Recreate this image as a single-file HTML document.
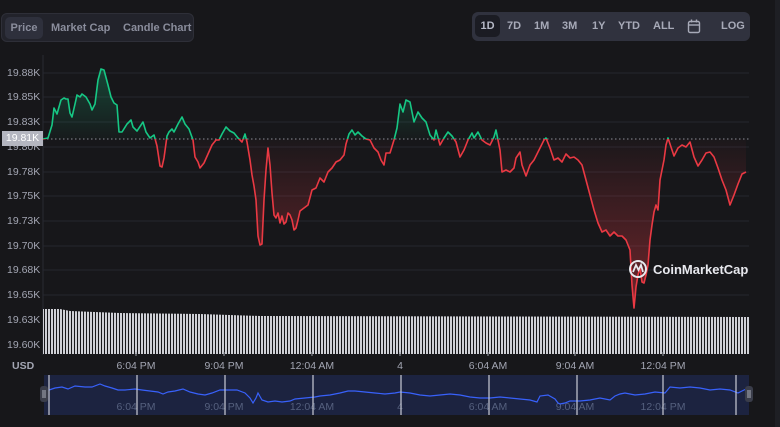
<!DOCTYPE html>
<html><head><meta charset="utf-8"><style>
body{margin:0;width:780px;height:427px;background:#17171a;overflow:hidden;font-family:"Liberation Sans",sans-serif;position:relative}
.tabs{position:absolute;left:1px;top:13px;width:193px;height:29px;background:#22232b;border:1px solid #2e2f38;border-radius:6px;box-sizing:border-box}
.tabs span{position:absolute;top:8px;font-size:11px;color:#8a8d9c;font-weight:bold}
.tabs .on{position:absolute;left:3px;top:3px;width:38px;height:22px;background:#2e303c;border-radius:5px;color:#8a8d9c;line-height:22px;text-align:center;font-weight:bold;font-size:11px}
.rng{position:absolute;left:472px;top:12px;width:278px;height:29px;background:#30323e;border-radius:6px}
.rng span{position:absolute;top:8px;font-size:11px;color:#a7aab8;font-weight:bold}
.rng .on{position:absolute;left:3px;top:3px;width:25px;height:22px;background:#1b1c23;border-radius:5px;line-height:22px;text-align:center;color:#b6b9c6;font-size:11px;font-weight:bold}
.yl{position:absolute;left:7px;font-size:10.5px;color:#a3a6b3;transform:translateY(-6px)}
.xl{position:absolute;top:360px;font-size:10.5px;color:#a3a6b3;transform:translateX(-50%)}
</style></head><body>
<div class="tabs"><div class="on">Price</div><span style="left:49px">Market Cap</span><span style="left:121px">Candle Chart</span></div>
<div class="rng"><div class="on">1D</div><span style="left:35px">7D</span><span style="left:62px">1M</span><span style="left:90px">3M</span><span style="left:120px">1Y</span><span style="left:146px">YTD</span><span style="left:181px">ALL</span>
<svg style="position:absolute;left:215px;top:7px" width="14" height="15" viewBox="0 0 14 15"><rect x="1.5" y="2.5" width="11" height="11" rx="1.5" fill="none" stroke="#a7aab8" stroke-width="1.4"/><line x1="1.5" y1="6" x2="12.5" y2="6" stroke="#a7aab8" stroke-width="1.4"/><line x1="4.5" y1="0.5" x2="4.5" y2="3.5" stroke="#a7aab8" stroke-width="1.4"/><line x1="9.5" y1="0.5" x2="9.5" y2="3.5" stroke="#a7aab8" stroke-width="1.4"/></svg>
<span style="left:249px">LOG</span></div>
<div style="position:absolute;left:775px;top:0;width:5px;height:427px;background:#1e1f24"></div>
<svg id="s" style="position:absolute;left:0;top:0" width="780" height="427">
<defs>
<clipPath id="up"><rect x="0" y="0" width="780" height="139"/></clipPath>
<clipPath id="dn"><rect x="0" y="139" width="780" height="300"/></clipPath>
<linearGradient id="gg" gradientUnits="userSpaceOnUse" x1="0" y1="65" x2="0" y2="139"><stop offset="0" stop-color="#16c784" stop-opacity="0.28"/><stop offset="1" stop-color="#16c784" stop-opacity="0.02"/></linearGradient>
<linearGradient id="rg" gradientUnits="userSpaceOnUse" x1="0" y1="139" x2="0" y2="300"><stop offset="0" stop-color="#ea3943" stop-opacity="0.02"/><stop offset="1" stop-color="#ea3943" stop-opacity="0.4"/></linearGradient>
<pattern id="vb" width="3" height="10" patternUnits="userSpaceOnUse"><rect width="2" height="10" fill="#cfd0d6"/></pattern>
</defs>
<line x1="43" y1="55" x2="43" y2="355" stroke="#2a2b33"/>
<g stroke="#26272f" stroke-width="1">
<line x1="43" y1="73" x2="749" y2="73"/><line x1="43" y1="97" x2="749" y2="97"/><line x1="43" y1="122" x2="749" y2="122"/><line x1="43" y1="147" x2="749" y2="147"/><line x1="43" y1="172" x2="749" y2="172"/><line x1="43" y1="196" x2="749" y2="196"/><line x1="43" y1="221" x2="749" y2="221"/><line x1="43" y1="246" x2="749" y2="246"/><line x1="43" y1="270" x2="749" y2="270"/><line x1="43" y1="295" x2="749" y2="295"/></g>
<polygon points="43,309 60,309 70,311 120,313 200,314 260,316 749,317 749,354 43,354" fill="url(#vb)"/>
<polygon id="fu" clip-path="url(#up)" fill="url(#gg)"/>
<polygon id="fd" clip-path="url(#dn)" fill="url(#rg)"/>
<line x1="43" y1="139" x2="749" y2="139" stroke="#8a8c96" stroke-dasharray="1.5 2.5"/>
<polyline id="lr" fill="none" stroke-width="1.6" stroke-linejoin="round" stroke="#ea3943" clip-path="url(#dn)"/>
<polyline id="lg" fill="none" stroke-width="1.6" stroke-linejoin="round" stroke="#16c784" clip-path="url(#up)"/>
<g stroke="#9a9ca6"><line x1="136" y1="352" x2="136" y2="356"/><line x1="224" y1="352" x2="224" y2="356"/><line x1="312" y1="352" x2="312" y2="356"/><line x1="400" y1="352" x2="400" y2="356"/><line x1="488" y1="352" x2="488" y2="356"/><line x1="575" y1="352" x2="575" y2="356"/><line x1="663" y1="352" x2="663" y2="356"/></g>
<rect x="44" y="375" width="705" height="40" fill="#1c2340"/>
<g fill="#55607e" font-size="10.5" font-family="Liberation Sans" text-anchor="middle"><text x="136" y="410">6:04 PM</text><text x="224" y="410">9:04 PM</text><text x="312" y="410">12:04 AM</text><text x="400" y="410">4</text><text x="488" y="410">6:04 AM</text><text x="575" y="410">9:04 AM</text><text x="663" y="410">12:04 PM</text></g>
<polyline fill="none" stroke="#3861fb" stroke-width="1.2" points="49,390 55,388 62,387 68,389 75,386 85,387 92,387 100,384 105,386 112,388 118,390 125,390 135,389 142,390 150,391 158,392 163,394 168,392 175,391 183,389 190,392 198,394 205,395 212,393 220,390 228,390 237,390 245,393 250,398 253,403 256,398 258,393 262,400 268,402 275,401 282,402 290,401 295,399 305,398 315,397 320,396 330,395 340,393 348,391 355,391 365,392 375,393 385,394 395,393 400,392 410,393 420,395 430,396 440,395 450,394 460,395 470,397 480,398 490,398 500,397 510,398 520,399 530,400 537,402 540,396 548,395 555,399 558,403 560,404 565,403 570,401 580,401 590,400 600,398 610,400 615,396 620,394 625,393 635,395 645,394 655,392 665,393 670,387 680,388 690,387 700,388 710,390 720,389 730,390 738,393 744,390 749,388"/>
<g stroke="#c9ccd6" stroke-width="1.2"><line x1="49" y1="375" x2="49" y2="415"/><line x1="137" y1="375" x2="137" y2="415"/><line x1="225" y1="375" x2="225" y2="415"/><line x1="313" y1="375" x2="313" y2="415"/><line x1="401" y1="375" x2="401" y2="415"/><line x1="489" y1="375" x2="489" y2="415"/><line x1="577" y1="375" x2="577" y2="415"/><line x1="663" y1="375" x2="663" y2="415"/><line x1="736" y1="375" x2="736" y2="415"/></g>
<rect x="40" y="386" width="8" height="16" rx="3" fill="#3a3d4a"/><rect x="745" y="386" width="8" height="16" rx="3" fill="#3a3d4a"/>
<g stroke="#c9ccd6" stroke-width="0.8"><line x1="43" y1="390" x2="43" y2="398"/><line x1="45" y1="390" x2="45" y2="398"/><line x1="748" y1="390" x2="748" y2="398"/><line x1="750" y1="390" x2="750" y2="398"/></g>
<circle cx="638" cy="269" r="8" fill="none" stroke="#e8e9ee" stroke-width="2"/>
<path d="M633,272 L636,265 L638.5,270 L641,265 L643,272" fill="none" stroke="#e8e9ee" stroke-width="1.8"/>
<text x="653" y="274" fill="#e8e9ee" font-size="13" font-weight="bold" font-family="Liberation Sans">CoinMarketCap</text>
</svg>
<script>
var p="43,139 48,138 52,125 54,108 57,114 61,100 64,98 66,99 68,99 70,113 72,117 75,104 77,95 80,97 82,94 86,97 90,104 92,110 95,104 98,80 101,69 104,70 108,85 111,97 114,103 117,105 119,132 122,132 127,124 131,120 133,127 137,131 143,122 146,132 150,138 154,135 157,146 160,166 162,167 164,158 167,136 169,132 172,129 174,132 178,124 182,117 185,124 189,129 193,140 195,157 198,162 200,168 204,163 208,154 212,145 216,140 219,140 222,134 226,127 230,131 234,133 238,138 242,142 245,134 247,142 250,160 252,175 254,186 256,200 258,236 260,245 262,244 264,200 266,170 268,148 270,165 272,193 274,215 276,218 278,213 280,223 282,216 284,224 286,222 288,213 290,215 292,220 294,230 296,228 298,220 300,211 304,208 308,205 312,190 316,188 320,178 324,182 328,172 332,168 336,162 340,160 344,155 346,144 349,134 352,130 355,135 358,132 362,136 366,139 370,140 374,148 378,152 381,160 384,165 386,153 390,153 394,140 397,128 400,104 403,112 406,100 410,102 414,122 418,112 422,118 426,122 430,135 434,140 436,130 440,145 444,138 448,132 452,136 456,142 460,157 464,150 468,140 472,133 474,138 478,132 482,140 486,143 490,145 494,137 496,130 500,150 502,172 506,170 510,172 514,168 516,158 520,152 522,165 526,176 530,165 534,160 538,152 542,144 544,140 546,138 550,148 554,160 558,158 562,162 566,154 570,158 574,157 578,160 582,165 586,180 590,195 594,210 598,223 602,232 606,230 610,236 614,232 618,236 622,236 626,240 630,250 632,285 634,308 636,287 638,275 640,268 642,282 644,283 646,275 648,265 650,240 652,225 654,212 656,205 658,210 660,180 664,160 666,145 668,138 672,150 674,156 678,148 682,145 686,147 690,142 694,157 698,166 702,160 706,153 710,152 714,157 718,168 722,180 726,190 730,205 734,195 738,184 742,174 746,172";
document.getElementById('lr').setAttribute('points',p);
document.getElementById('lg').setAttribute('points',p);
document.getElementById('fu').setAttribute('points',p+" 746,139");
document.getElementById('fd').setAttribute('points',p+" 746,139");
</script>
<div class="yl" style="top:73px">19.88K</div><div class="yl" style="top:97px">19.85K</div><div class="yl" style="top:122px">19.83K</div><div class="yl" style="top:147px">19.80K</div><div class="yl" style="top:172px">19.78K</div><div class="yl" style="top:196px">19.75K</div><div class="yl" style="top:221px">19.73K</div><div class="yl" style="top:246px">19.70K</div><div class="yl" style="top:270px">19.68K</div><div class="yl" style="top:295px">19.65K</div><div class="yl" style="top:320px">19.63K</div><div class="yl" style="top:345px">19.60K</div>
<div style="position:absolute;left:2px;top:131px;width:41px;height:15px;background:#b4b6c0;color:#fff;font-size:10.5px;line-height:15px;text-align:center">19.81K</div>
<div style="position:absolute;left:12px;top:360px;font-size:10.5px;color:#a3a6b3;font-weight:bold">USD</div>
<div class="xl" style="left:136px">6:04 PM</div><div class="xl" style="left:224px">9:04 PM</div><div class="xl" style="left:312px">12:04 AM</div><div class="xl" style="left:400px">4</div><div class="xl" style="left:488px">6:04 AM</div><div class="xl" style="left:575px">9:04 AM</div><div class="xl" style="left:663px">12:04 PM</div>
</body></html>
